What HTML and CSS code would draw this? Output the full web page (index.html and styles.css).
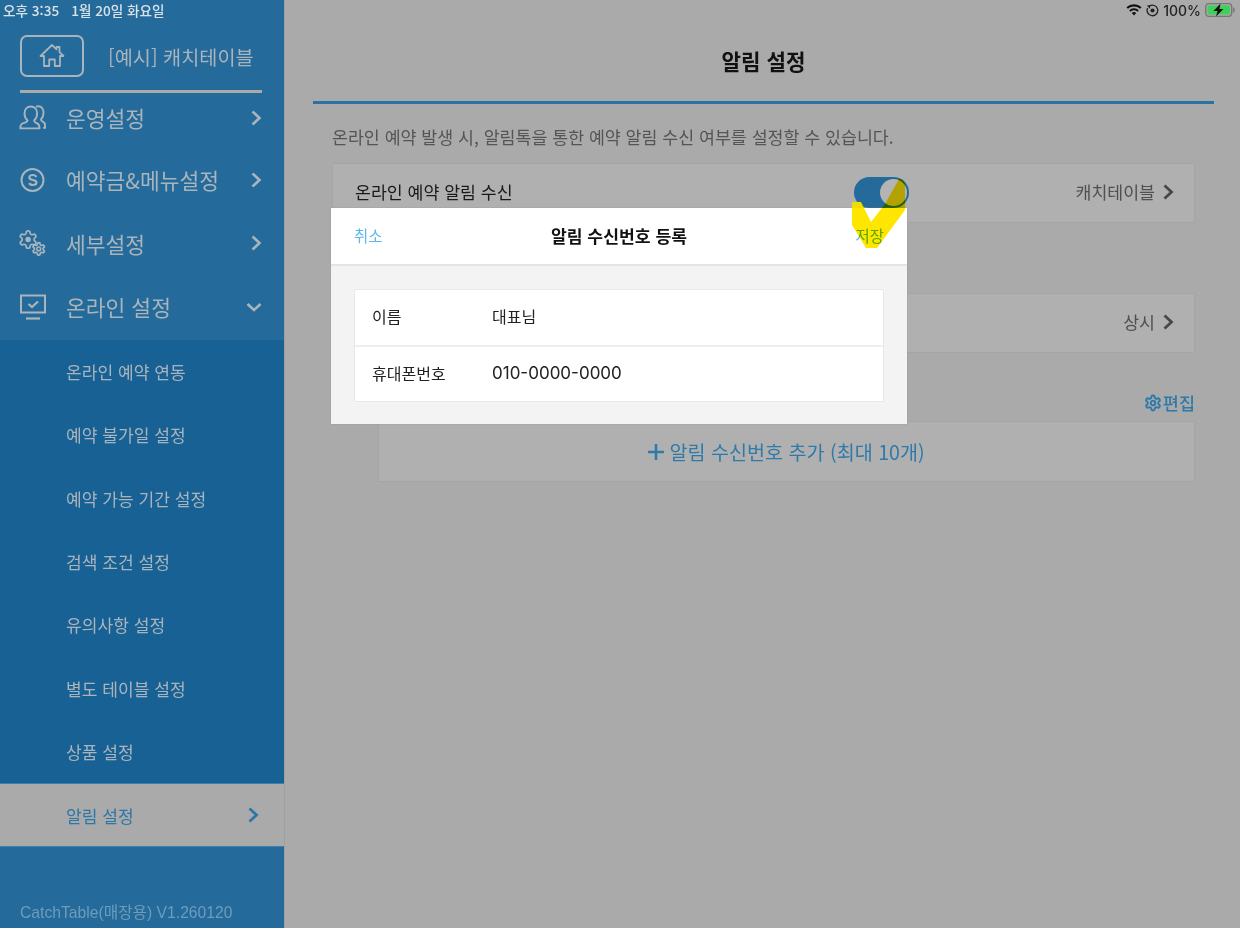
FILE: index.html
```html
<!DOCTYPE html>
<html lang="ko">
<head>
<meta charset="utf-8">
<title>알림 설정</title>
<link rel="stylesheet" href="styles.css">
</head>
<body>
<svg class="defs" width="0" height="0"><defs>
  <path id="gear" d="M12.220 2h-.44a2 2 0 0 0-2 2v.18a2 2 0 0 1-1 1.730l-.43.25a2 2 0 0 1-2 0l-.15-.08a2 2 0 0 0-2.730.73l-.22.38a2 2 0 0 0 .73 2.730l.15.1a2 2 0 0 1 1 1.720v.51a2 2 0 0 1-1 1.740l-.15.09a2 2 0 0 0-.73 2.730l.22.38a2 2 0 0 0 2.730.73l.15-.08a2 2 0 0 1 2 0l.43.25a2 2 0 0 1 1 1.730V20a2 2 0 0 0 2 2h.44a2 2 0 0 0 2-2v-.18a2 2 0 0 1 1-1.730l.43-.25a2 2 0 0 1 2 0l.15.08a2 2 0 0 0 2.730-.73l.22-.39a2 2 0 0 0-.73-2.730l-.15-.08a2 2 0 0 1-1-1.740v-.5a2 2 0 0 1 1-1.740l.15-.09a2 2 0 0 0 .73-2.730l-.22-.38a2 2 0 0 0-2.730-.73l-.15.08a2 2 0 0 1-2 0l-.43-.25a2 2 0 0 1-1-1.730V4a2 2 0 0 0-2-2z"/>
  <path id="chev" d="M2.500 1.500l7 6.500-7 6.500"/>
</defs></svg>
<div class="app">
  <aside class="sidebar">
    <div class="brand">
      <button class="home"><svg width="26" height="26" viewBox="0 0 26 26" fill="none" stroke="currentColor" stroke-width="1.800" stroke-linejoin="round"><path d="M1.500 13 13 2l4.500 4.300V4h3v5.200l4 3.800h-3.500v10h-5.200v-6.500h-5.600V23H5V13z"/></svg></button>
      <span class="brand-name">[예시] 캐치테이블</span>
    </div>
    <nav class="menu">
      <a class="menu-row"><svg class="mi" width="28" height="26" viewBox="0 0 28 26" fill="none" stroke="currentColor" stroke-width="1.900" stroke-linejoin="round"><path d="M8.500 15.500C6.300 13.500 5.500 11 5.500 8.500c0-4 2.500-7 6.300-7s6.300 3 6.300 7c0 2.500-.8 5-3 7 0 1.700 1.300 2.200 3.200 3 1.800.8 2.200 1.700 2.200 4.900H1.300c0-3.200.4-4.100 2.200-4.900 1.900-.8 5-1.300 5-3z"/><path d="M17 1.700c.7-.3 1.400-.5 2.200-.5 3.400 0 5.300 3 5.300 6.500 0 2.800-.8 5-2.500 6.800 0 1.700 2.200 2.400 3.200 3.300.9.800 1 1.600.9 5.100h-2"/></svg><span>운영설정</span><svg class="chev" width="12" height="16" viewBox="0 0 12 16" fill="none" stroke="currentColor" stroke-width="2.600"><use href="#chev"/></svg></a>
      <a class="menu-row"><svg class="mi" width="28" height="26" viewBox="0 0 28 26" fill="none" stroke="currentColor" stroke-width="2"><circle cx="13.500" cy="13" r="11"/><path stroke-width="2.100" d="M17.300 10c-.5-1.300-1.800-2-3.500-2-2 0-3.500.9-3.500 2.500 0 3.500 7.200 1.500 7.200 5 0 1.600-1.600 2.500-3.600 2.500-1.800 0-3.200-.7-3.700-2"/></svg><span>예약금&amp;메뉴설정</span><svg class="chev" width="12" height="16" viewBox="0 0 12 16" fill="none" stroke="currentColor" stroke-width="2.600"><use href="#chev"/></svg></a>
      <a class="menu-row"><svg class="mi" width="28" height="26" viewBox="0 0 28 26" fill="none" stroke="currentColor"><use href="#gear" transform="translate(-1.200 -.8) scale(.86)" stroke-width="2"/><circle cx="9.100" cy="9.500" r="2.700" fill="currentColor" stroke="none"/><use href="#gear" transform="translate(12.300 11.500) scale(.62)" stroke-width="2.800" fill="#246a9a"/><circle cx="19.700" cy="18.900" r="1.900" stroke-width="1.500"/></svg><span>세부설정</span><svg class="chev" width="12" height="16" viewBox="0 0 12 16" fill="none" stroke="currentColor" stroke-width="2.600"><use href="#chev"/></svg></a>
      <a class="menu-row"><svg class="mi" width="28" height="26" viewBox="0 0 28 26" fill="none" stroke="currentColor" stroke-width="2"><path d="M2 1.500h24v17H2z"/><path stroke-width="2.200" d="M7 24.500h14"/><path stroke-width="2.200" d="M9.500 10l3.500 3 6-5.500"/></svg><span>온라인 설정</span><svg class="chev-down" width="16" height="12" viewBox="0 0 16 12" fill="none" stroke="currentColor" stroke-width="2.600"><path d="M1.500 3l6.500 6 6.500-6"/></svg></a>
    </nav>
    <ul class="submenu">
      <li class="sub-row">온라인 예약 연동</li>
      <li class="sub-row">예약 불가일 설정</li>
      <li class="sub-row">예약 가능 기간 설정</li>
      <li class="sub-row">검색 조건 설정</li>
      <li class="sub-row">유의사항 설정</li>
      <li class="sub-row">별도 테이블 설정</li>
      <li class="sub-row">상품 설정</li>
      <li class="sub-row active"><span>알림 설정</span><svg width="12" height="16" viewBox="0 0 12 16" fill="none" stroke="currentColor" stroke-width="2.800"><use href="#chev"/></svg></li>
    </ul>
    <div class="version">CatchTable(매장용) V1.260120</div>
  </aside>

  <main class="main">
    <h1 class="title">알림 설정</h1>
    <div class="content">
      <p class="desc">온라인 예약 발생 시, 알림톡을 통한 예약 알림 수신 여부를 설정할 수 있습니다.</p>
      <div class="card first">
        <span class="card-label">온라인 예약 알림 수신</span>
        <span class="toggle"><i class="knob"></i></span>
        <span class="card-value">캐치테이블<svg width="12" height="16" viewBox="0 0 12 16" fill="none" stroke="currentColor" stroke-width="2.800"><use href="#chev"/></svg></span>
      </div>
      <div class="card second">
        <span class="card-value">상시<svg width="12" height="16" viewBox="0 0 12 16" fill="none" stroke="currentColor" stroke-width="2.800"><use href="#chev"/></svg></span>
      </div>
      <div class="edit-row"><span class="edit"><svg width="18" height="18" viewBox="0 0 24 24" fill="none" stroke="currentColor" stroke-width="2.600"><use href="#gear"/><circle cx="12" cy="12" r="3"/></svg>편집</span></div>
      <div class="add-box"><svg class="plus" width="16" height="16" viewBox="0 0 16 16" fill="none" stroke="currentColor" stroke-width="2.600"><path d="M8 0v16M0 8h16"/></svg>알림 수신번호 추가 (최대 10개)</div>
    </div>
  </main>

  <div class="statusbar">
    <span class="status-left">오후 3:35<span class="status-date">1월 20일 화요일</span></span>
    <span class="status-right">
      <svg width="16" height="12" viewBox="0 0 16 12"><path fill="#111" d="M8 11.500 5.800 9a3.200 3.200 0 0 1 4.400 0zM4.500 7.700 3.200 6.200a7 7 0 0 1 9.600 0l-1.300 1.500a5 5 0 0 0-7 0zM1.900 4.800.4 3.300a11 11 0 0 1 15.200 0l-1.500 1.500a9 9 0 0 0-12.200 0z"/></svg>
      <svg width="13" height="13" viewBox="0 0 13 13" fill="none" stroke="#222" stroke-width="1.300"><path d="M3.500 2a5.300 5.300 0 1 1-1.800 2"/><path fill="#222" stroke="none" d="M.8 1.500l3.500-.3-.3 3.500z"/><circle cx="6.500" cy="6.500" r="2.100" fill="#222" stroke="none"/></svg>
      <span class="pct">100%</span>
      <svg class="battery" width="30" height="14" viewBox="0 0 30 14"><rect x=".7" y=".7" width="26" height="12.600" rx="3" fill="none" stroke="#777" stroke-width="1.300"/><rect x="2.500" y="2.500" width="22.500" height="9" rx="1.500" fill="#3ed15a"/><rect x="28" y="4.500" width="1.500" height="5" rx=".7" fill="#777"/><path fill="#111" d="M15.500 .5 8.500 8h4l-1.500 5.500L18.500 6h-4z"/></svg>
    </span>
  </div>

  <div class="modal">
    <header class="modal-head"><span class="cancel">취소</span><strong>알림 수신번호 등록</strong><span class="save">저장</span></header>
    <div class="modal-body">
      <dl class="form">
        <div class="form-row"><dt>이름</dt><dd>대표님</dd></div>
        <div class="form-row"><dt>휴대폰번호</dt><dd class="phone">010-0000-0000</dd></div>
      </dl>
    </div>
  </div>

  <svg class="tick" width="60" height="76" viewBox="0 0 60 76"><path fill="#ffe600" d="M0 27H9L19 47 33 29 47 4C50 4 53 6 53 10V35L25 73H14L0 50z"/></svg>
  <svg class="tick-top" width="13" height="6" viewBox="0 0 13 6"><path fill="#f2db00" d="M0 0H9L12 6H0z"/></svg>
</div>
</body>
</html>
```

FILE: styles.css
```css
* { box-sizing: border-box; }
html, body { margin: 0; height: 100%; }
body { font-family: "Noto Sans CJK KR", "Noto Sans", sans-serif; background: #aaa; overflow: hidden; }
.defs { position: absolute; }

.app { position: relative; display: flex; width: 1240px; height: 928px; }

.sidebar { display: flex; flex-direction: column; width: 285px; height: 928px; padding-top: 35px; background: #246a9a; border-right: 1px solid #a0a0a0; color: #a9b4bc; }
.brand { display: flex; align-items: center; gap: 24px; height: 58px; margin: 0 22px 0 20px; padding-bottom: 13px; border-bottom: 3px solid #aaa; }
.home { display: flex; align-items: center; justify-content: center; width: 64px; height: 42px; padding: 0; background: none; border: 2px solid #a9b4bc; border-radius: 7px; color: #a9b4bc; flex: none; }
.brand-name { font-size: 19.700px; white-space: nowrap; }

.menu { display: flex; flex-direction: column; margin-top: -6px; padding-bottom: 1px; }
.menu-row { display: flex; align-items: center; height: 63.500px; padding: 0 22px 0 19px; font-size: 21.500px; }
.menu-row:first-child { height: 61px; }
.menu-row span { flex: 1; margin-left: 19px; }
.mi { flex: none; }

.submenu { list-style: none; margin: 0; padding: 0; background: #186194; display: flex; flex-direction: column; }
.sub-row { display: flex; align-items: center; justify-content: space-between; height: 63.430px; padding: 0 25px 0 66px; font-size: 17.100px; }
.sub-row.active { background: #aaa; color: #2c77a8; border-top: 1px solid #3f80ab; border-bottom: 1px solid #3f80ab; height: 64px; }
.version { margin-top: auto; padding: 0 0 5px 20px; font-family: "Liberation Sans", "Noto Sans CJK KR", sans-serif; font-size: 15.700px; line-height: 20px; color: #6e9cbb; }

.main { flex: 1; display: flex; flex-direction: column; padding: 0 26px 0 28px; min-width: 0; }
.title { margin: 0; height: 104px; padding-top: 43px; border-bottom: 3px solid #2a72a3; text-align: center; font-size: 21.200px; font-weight: 700; line-height: 36px; color: #111; }
.content { display: flex; flex-direction: column; padding: 0 19px; }
.desc { margin: 0; height: 59px; padding-top: 21px; font-size: 17.320px; line-height: 24px; white-space: nowrap; color: #555; }
.card { display: flex; align-items: center; height: 60px; padding: 0 20px 0 22px; background: #b0b0b0; border: 1px solid #a5a5a5; font-size: 17.300px; line-height: 24px; }
.card span { position: relative; top: -1px; }
.card.first { position: relative; margin-bottom: 70px; }
.card.second { justify-content: flex-end; }
.card-label { color: #1a1a1a; }
.card-value { display: inline-flex; align-items: center; gap: 7px; margin-left: auto; color: #505050; }
.card-value svg { color: #484848; }
.card .toggle { position: absolute; left: 521px; top: 13px; width: 55px; height: 31px; border-radius: 16px; background: #246a9a; }
.knob { position: absolute; right: 2px; top: 2px; width: 27px; height: 27px; border-radius: 50%; background: #b4b4b4; }
.edit-row { display: flex; justify-content: flex-end; align-items: flex-end; height: 68px; padding-bottom: 6px; }
.edit { display: inline-flex; align-items: center; gap: 1px; font-size: 17.500px; line-height: 24px; font-weight: 500; color: #2f7aa9; }
.add-box { display: flex; align-items: center; justify-content: center; gap: 5px; height: 61px; margin-left: 46px; background: #b0b0b0; border: 1px solid #a5a5a5; font-size: 19.600px; color: #2f7aa9; }
.plus { flex: none; }

.statusbar { position: absolute; left: 0; top: 0; width: 100%; height: 20px; display: flex; justify-content: space-between; align-items: center; padding: 0 5px 0 3px; font-size: 13.600px; }
.status-left { color: #d9e2e8; font-weight: 500; white-space: nowrap; }
.status-date { margin-left: 12px; }
.status-right { display: inline-flex; align-items: center; gap: 4px; color: #222; font-family: Inter, "Liberation Sans", sans-serif; font-size: 14px; font-weight: 500; }

.modal { position: absolute; left: 331px; top: 208px; width: 576px; height: 216px; background: #f3f3f3; box-shadow: 0 0 1px #888; }
.modal-head { display: grid; grid-template-columns: 1fr auto 1fr; align-items: center; height: 58px; padding: 0 23px 2px; background: #fff; border-bottom: 2px solid #e4e4e4; font-size: 15.500px; }
.modal-head strong { font-size: 17.200px; font-weight: 700; color: #111; }
.cancel { color: #5bb8e8; }
.save { color: #5bb8e8; text-align: right; }
.modal-body { padding: 23px 23px 22px; }
.form { margin: 0; background: #fff; border: 1px solid #e8e8e8; border-radius: 2px; }
.form-row { display: flex; align-items: center; height: 55px; padding: 0 17px 3px; font-size: 16px; color: #222; }
.form-row + .form-row { height: 56px; padding-bottom: 2px; border-top: 2px solid #eee; }
.form-row dt { width: 120px; font-size: 16px; }
.form-row dd { margin: 0; }
.phone { font-family: Inter, "Liberation Sans", sans-serif; font-size: 17px; }

.tick { position: absolute; left: 852px; top: 175px; mix-blend-mode: multiply; pointer-events: none; }
.tick-top { position: absolute; left: 852px; top: 202px; pointer-events: none; }
```
